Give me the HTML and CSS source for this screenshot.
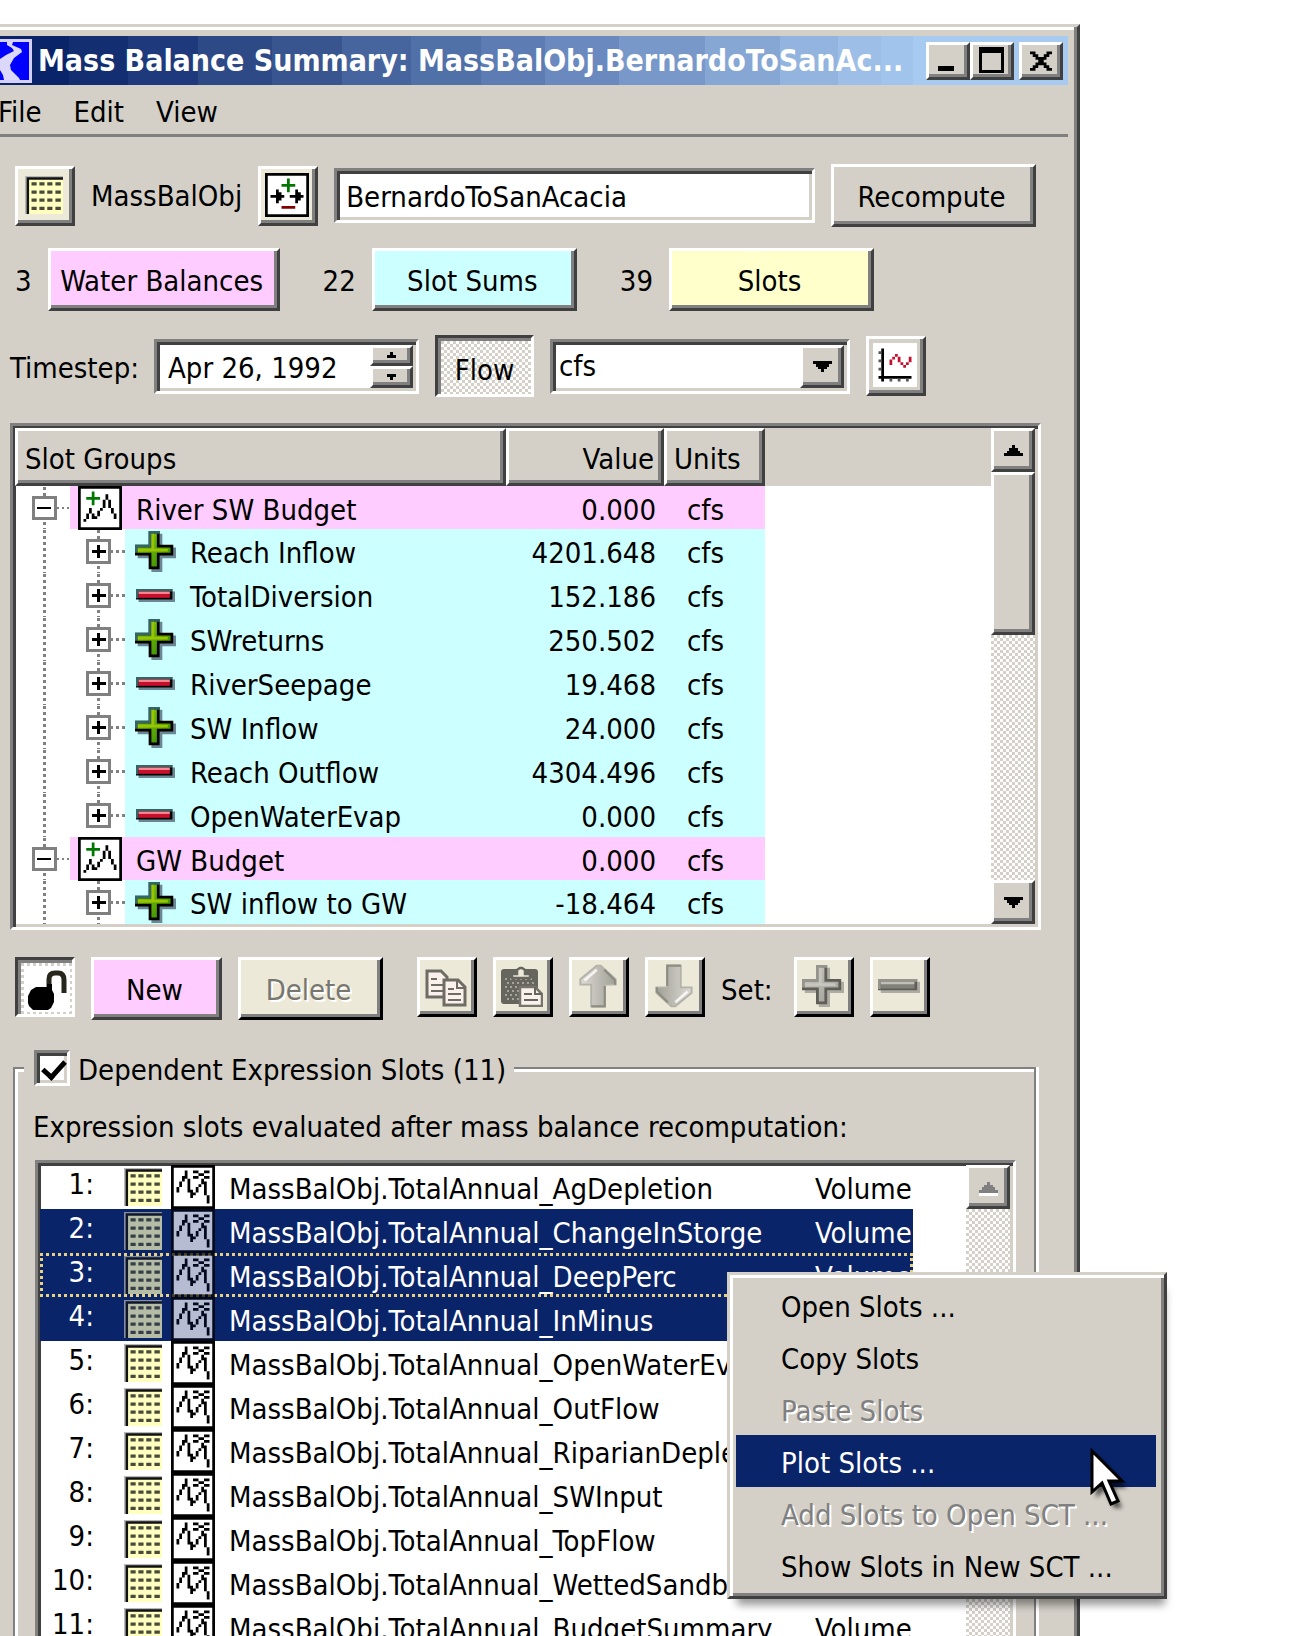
FILE: index.html
```html
<!DOCTYPE html>
<html lang="en">
<head>
<meta charset="utf-8">
<title>Mass Balance Summary</title>
<link rel="stylesheet" href="styles.css">
</head>
<body>
<svg class="defs" aria-hidden="true">
  <defs>
    <linearGradient id="g-green" x1="0" y1="0" x2="1" y2="1"><stop offset="0" stop-color="#8c1"/><stop offset="1" stop-color="#380"/></linearGradient>
    <linearGradient id="g-arrow" x1="0" y1="0" x2="1" y2="0"><stop offset="0" stop-color="#dddad4"/><stop offset="1" stop-color="#a0a096"/></linearGradient>
    <filter id="soft"><feGaussianBlur stdDeviation="2"/></filter>
  </defs>
  <symbol id="i-grid" viewBox="0 0 14 14">
    <path fill="#b8b8b8" d="M0 0h14v1H0zM0 0h1v14H0z"/>
    <path fill="#ffffc0" d="M1 1h13v13H1z"/>
    <path fill="#111" d="M.6 .5H14v.9H1.5V14H.6z"/>
    <path fill="#4a4a3c" d="M2.400 2.300h1.900v1.200H2.400zM5.300 2.300h1.900v1.200H5.300zM8.200 2.300h1.900v1.200H8.200zM11.200 2.300h2v1.200h-2zM2.400 5.300h1.900v1.200H2.400zM5.300 5.300h1.900v1.200H5.300zM8.200 5.300h1.900v1.200H8.200zM11.200 5.300h2v1.200h-2zM2.400 8.300h1.900v1.200H2.400zM5.300 8.300h1.900v1.200H5.300zM8.200 8.300h1.900v1.200H8.200zM11.200 8.300h2v1.200h-2zM2.400 11.300h1.900v1.200H2.400zM5.300 11.300h1.900v1.200H5.300zM8.200 11.300h1.900v1.200H8.200zM11.200 11.300h2v1.200h-2z"/>
  </symbol>
  <symbol id="i-balance" viewBox="0 0 16 16">
    <path d="M0 0h16v16H0z"/><path fill="#fff" d="M1 1h14v14H1z"/>
    <path fill="#070" d="M6 4h5v1H6zM8 2h1v5H8z"/>
    <path fill="#800000" d="M6 12h5v1H6z"/>
    <path d="M2 8h5v1H2zM4 6h1v5H4zM5 7h1v3H5zM9 8h5v1H9zM11 6h1v5h-1zM12 7h1v3h-1z"/>
  </symbol>
  <symbol id="i-plot" viewBox="0 0 16 16">
    <path fill="#fff" d="M0 0h16v16H0z"/>
    <path d="M3 2h1v12H3zM2 12h12v1H2z"/>
    <path fill="#555" d="M2 3h1v1H2zM2 6h1v1H2zM2 9h1v1H2zM6 13h1v1H6zM9 13h1v1H9zM12 13h1v1h-1z"/>
    <path fill="#c8102e" d="M6 6h1v2H6zM7 5h1v1H7zM8 4h1v1H8zM9 5h1v2H9zM10 7h1v1h-1zM11 8h1v1h-1zM12 7h1v1h-1zM13 5h1v2h-1z"/>
  </symbol>
  <symbol id="i-budget" viewBox="0 0 16 16">
    <path d="M0 0h16v16H0z"/><path fill="#fff" d="M1 1h14v14H1z"/>
    <path fill="#070" d="M3 4h5v1H3zM5 2h1v5H5z"/>
    <path d="M2 12h1v1H2zM3 10h1v2H3zM4 8h1v2H4zM5 10h1v2H5zM6 11h1v1H6zM7 9h1v2H7zM8 8h1v1H8zM9 5h1v3H9zM10 3h1v2h-1zM11 5h1v3h-1zM12 8h1v2h-1zM13 10h1v2h-1z"/>
  </symbol>
  <symbol id="i-expr" viewBox="0 0 16 16">
    <path class="edge" d="M0 0h16v16H0z"/><path class="face" d="M1 1h14v14H1z"/>
    <path class="edge" d="M2 8h1v2H2zM3 6h1v2H3zM4 4h1v2H4zM5 2h1v3H5zM6 5h1v5H6zM7 9h1v3H7zM8 10h1v1H8zM9 8h1v2H9zM10 7h1v1h-1zM11 5h1v2h-1zM12 6h1v5h-1zM13 11h1v3h-1zM8 2h2v1H8zM12 2h2v1h-2zM10 3h2v1h-2zM8 4h2v1H8zM12 4h2v1h-2z"/>
  </symbol>
  <symbol id="i-plus" viewBox="0 0 15 15">
    <path fill="#6b8796" d="M6 1h4v5h5v4h-5v5H6v-5H1V6h5z"/>
    <path d="M5 0h4v5h5v4H9v5H5V9H0V5h5z"/>
    <path fill="#366" d="M5 0h4v1H6v5H1v2H0V5h5z"/>
    <path fill="url(#g-green)" d="M6 1h2v5h5v2H8v5H6V8H1V6h5z"/>
    <path fill="#9bc400" d="M6 1h1v5.500h5v1H1v-1h5z"/>
  </symbol>
  <symbol id="i-minus" viewBox="0 0 15 5">
    <path fill="#6b8796" d="M1 1h14v4H1z"/><path d="M0 0h14v4H0z"/>
    <path fill="#366" d="M0 0h14v1H1v2.600H0z"/><path fill="#c8102e" d="M1 1h12v2.400H1z"/><path fill="#f58a92" d="M1 1h12v.9H1z"/>
  </symbol>
  <symbol id="t-group" viewBox="0 0 55 44" shape-rendering="crispEdges">
    <path class="dots" d="M29.500 1v43M41 22.500h14"/>
    <path class="box" d="M18.500 11.500h22v22h-22z"/><path d="M22 21h14v3H22z"/>
  </symbol>
  <symbol id="t-child" viewBox="0 0 110 44" shape-rendering="crispEdges">
    <path class="dots" d="M29.500 1v43M83.500 1v43M95 22.500h15"/>
    <path class="box" d="M72.500 11.500h22v22h-22z"/><path d="M77 21h14v3H77zM82 16h3v13h-3z"/>
  </symbol>
  <symbol id="t-last" viewBox="0 0 110 44" shape-rendering="crispEdges">
    <path class="dots" d="M29.500 1v43M83.500 1v12M95 22.500h15"/>
    <path class="box" d="M72.500 11.500h22v22h-22z"/><path d="M77 21h14v3H77zM82 16h3v13h-3z"/>
  </symbol>
  <symbol id="i-up" viewBox="0 0 7 4" shape-rendering="crispEdges"><path d="M3 0h1v1h1v1h1v1h1v1H0V3h1V2h1V1h1z"/></symbol>
  <symbol id="i-down" viewBox="0 0 7 4" shape-rendering="crispEdges"><path d="M0 0h7v1H6v1H5v1H4v1H3V3H2V2H1V1H0z"/></symbol>
  <symbol id="i-uparrow" viewBox="0 0 14 16">
    <path fill="url(#g-arrow)" stroke="#b4b3aa" stroke-width=".7" d="M6.500 .5h1.500l5.500 5v2H9.500v8h-5v-8H.5v-2z"/>
    <path fill="none" stroke="#8c8c82" stroke-width=".8" d="M9.500 8v7.500h-5M13.300 7.500V6l-4-4"/>
    <path fill="none" stroke="#fff" stroke-width="1" opacity=".8" d="M2 6l4.500-4"/>
  </symbol>
</svg>

<main class="window">
  <header class="titlebar">
    <svg class="app-icon" viewBox="0 0 32 44" aria-hidden="true"><path fill="#d4d0f8" d="M0 0h32v44H0z"/><path fill="#00f" d="M0 3h29v38H0z"/><path fill="#dcd8fc" d="M7 3h6l-1 3 9 4 1 3-8 6-4 7 1 5 8 8 1 2H4l-1-5-3-5V20l6-4 8-4-2-3-5-3z"/></svg>
    <h1>Mass Balance Summary: MassBalObj.BernardoToSanAc...</h1>
    <div class="caption">
      <button class="raised cap" aria-label="Minimize"><svg viewBox="0 0 28 28"><path d="M5 19h16v5H5z"/></svg></button>
      <button class="raised cap" aria-label="Maximize"><svg viewBox="0 0 28 28" shape-rendering="crispEdges"><path fill-rule="evenodd" d="M2 0h25v26H2zM5 6v17h19V6z"/></svg></button>
      <button class="raised cap close" aria-label="Close"><svg class="cross" viewBox="0 0 8 7"><path d="M0 0h2v1h1v1h2V1h1V0h2v1H7v1H6v1H5v1h1v1h1v1h1v1H6V6H5V5H3v1H2v1H0V6h1V5h1V4h1V3H2V2H1V1H0z"/></svg></button>
    </div>
  </header>
  <nav class="menubar"><a href="#file">File</a><a href="#edit">Edit</a><a href="#view">View</a></nav>

  <div class="content">
    <div class="row object-row">
      <button class="raised tool cream" aria-label="Open object"><svg class="grid-icon"><use href="#i-grid"/></svg></button>
      <label for="slot-name">MassBalObj</label>
      <button class="raised tool cream" aria-label="Mass balance slot"><svg class="px16"><use href="#i-balance"/></svg></button>
      <input class="sunken name-input" id="slot-name" type="text" value="BernardoToSanAcacia">
      <button class="raised push">Recompute</button>
    </div>

    <div class="row count-row">
      <div class="count"><span>3</span><button class="raised push pink wide">Water Balances</button></div>
      <div class="count"><span>22</span><button class="raised push cyan">Slot Sums</button></div>
      <div class="count"><span>39</span><button class="raised push yellow">Slots</button></div>
    </div>

    <div class="row time-row">
      <label class="time-label" for="timestep">Timestep:</label>
      <div class="sunken field spin">
        <input id="timestep" type="text" value="Apr 26, 1992">
        <div class="spinner">
          <button class="raised" aria-label="Next timestep"><svg viewBox="0 0 3 2" shape-rendering="crispEdges"><path d="M1 0h1v1h1v1H0V1h1z"/></svg></button>
          <button class="raised" aria-label="Previous timestep"><svg viewBox="0 0 3 2" shape-rendering="crispEdges"><path d="M0 0h3v1H2v1H1V1H0z"/></svg></button>
        </div>
      </div>
      <button class="pressed flow" aria-pressed="true">Flow</button>
      <div class="sunken field combo">
        <select aria-label="Units"><option>cfs</option></select>
        <span class="raised drop"><svg class="tri"><use href="#i-down"/></svg></span>
      </div>
      <button class="raised tool" aria-label="Plot"><svg class="px16"><use href="#i-plot"/></svg></button>
    </div>

    <section class="sunken groups">
      <table class="tree">
        <colgroup><col class="c-name"><col class="c-value"><col class="c-units"><col></colgroup>
        <thead><tr><th class="raised">Slot Groups</th><th class="raised num">Value</th><th class="raised">Units</th><td></td></tr></thead>
        <tbody>
          <tr class="group"><td><div class="node"><svg class="g1"><use href="#t-group"/></svg><span><svg class="px16"><use href="#i-budget"/></svg><b>River SW Budget</b></span></div></td><td>0.000</td><td>cfs</td><td></td></tr>
          <tr class="child"><td><div class="node"><svg class="g2"><use href="#t-child"/></svg><span><svg class="sign"><use href="#i-plus"/></svg><b>Reach Inflow</b></span></div></td><td>4201.648</td><td>cfs</td><td></td></tr>
          <tr class="child"><td><div class="node"><svg class="g2"><use href="#t-child"/></svg><span><svg class="sign minus"><use href="#i-minus"/></svg><b>TotalDiversion</b></span></div></td><td>152.186</td><td>cfs</td><td></td></tr>
          <tr class="child"><td><div class="node"><svg class="g2"><use href="#t-child"/></svg><span><svg class="sign"><use href="#i-plus"/></svg><b>SWreturns</b></span></div></td><td>250.502</td><td>cfs</td><td></td></tr>
          <tr class="child"><td><div class="node"><svg class="g2"><use href="#t-child"/></svg><span><svg class="sign minus"><use href="#i-minus"/></svg><b>RiverSeepage</b></span></div></td><td>19.468</td><td>cfs</td><td></td></tr>
          <tr class="child"><td><div class="node"><svg class="g2"><use href="#t-child"/></svg><span><svg class="sign"><use href="#i-plus"/></svg><b>SW Inflow</b></span></div></td><td>24.000</td><td>cfs</td><td></td></tr>
          <tr class="child"><td><div class="node"><svg class="g2"><use href="#t-child"/></svg><span><svg class="sign minus"><use href="#i-minus"/></svg><b>Reach Outflow</b></span></div></td><td>4304.496</td><td>cfs</td><td></td></tr>
          <tr class="child"><td><div class="node"><svg class="g2"><use href="#t-last"/></svg><span><svg class="sign minus"><use href="#i-minus"/></svg><b>OpenWaterEvap</b></span></div></td><td>0.000</td><td>cfs</td><td></td></tr>
          <tr class="group"><td><div class="node"><svg class="g1"><use href="#t-group"/></svg><span><svg class="px16"><use href="#i-budget"/></svg><b>GW Budget</b></span></div></td><td>0.000</td><td>cfs</td><td></td></tr>
          <tr class="child"><td><div class="node"><svg class="g2"><use href="#t-child"/></svg><span><svg class="sign"><use href="#i-plus"/></svg><b>SW inflow to GW</b></span></div></td><td>-18.464</td><td>cfs</td><td></td></tr>
        </tbody>
      </table>
      <div class="scroll">
        <button class="raised arrow" aria-label="Scroll up"><svg class="tri"><use href="#i-up"/></svg></button>
        <div class="raised thumb"></div>
        <div class="track"></div>
        <button class="raised arrow" aria-label="Scroll down"><svg class="tri"><use href="#i-down"/></svg></button>
      </div>
    </section>

    <div class="row tools-row">
      <button class="pressed tool lock" aria-label="Unlocked"><svg viewBox="0 0 46 46"><path fill="#fff" d="M0 0h46v46H0z"/><path fill="none" stroke="#26261c" stroke-width="5" d="M25 24V13q0-6 6-6h3q6 0 6 7v13"/><path d="M12 21h11v-3h5v6l2 4v8l-3 6-3 2H9l-4-4-1-3v-7l3-6z"/></svg></button>
      <button class="raised push pink new">New</button>
      <button class="raised push delete off" disabled>Delete</button>
      <button class="raised tool off copy" aria-label="Copy" disabled><svg viewBox="0 0 42 42"><path fill="#fbf1ec" stroke="#6e6c64" stroke-width="3" d="M2 6h14l6 6v20H2z"/><path stroke="#6e6c64" stroke-width="2" d="M6 14h6M6 20h12M6 26h12"/><path fill="#fbf1ec" stroke="#6e6c64" stroke-width="3" d="M19 15h14l7 7v18H19z"/><path fill="none" stroke="#6e6c64" stroke-width="2" d="M32 15v8h8M23 24h6M23 29h13M23 35h13"/></svg></button>
      <button class="raised tool off" aria-label="Paste" disabled><svg viewBox="0 0 42 42"><rect x="0" y="4" width="37" height="35" rx="3" fill="#66665e"/><path stroke="#a4a497" stroke-width="2" stroke-dasharray="2 3" d="M4 14h29M6 18h27M4 22h16M6 26h14M4 30h14M6 34h12"/><path fill="#ece9d8" stroke="#66665e" stroke-width="2.500" d="M11 13V9h5V5l3-2h2l3 2v4h5v4z"/><path fill="#fbf1ec" stroke="#76746c" stroke-width="2.500" d="M19 22h15l7 7v12H19z"/><path fill="none" stroke="#66665e" stroke-width="2" d="M23 29h8M23 35h14M34 22v7h7"/></svg></button>
      <button class="raised tool off" aria-label="Move up" disabled><svg class="mover"><use href="#i-uparrow"/></svg></button>
      <button class="raised tool off" aria-label="Move down" disabled><svg class="mover flip"><use href="#i-uparrow"/></svg></button>
      <span class="set">Set:</span>
      <button class="raised tool off" aria-label="Set plus" disabled><svg class="sign gray"><use href="#i-plus"/></svg></button>
      <button class="raised tool off" aria-label="Set minus" disabled><svg class="sign minus gray"><use href="#i-minus"/></svg></button>
    </div>

    <fieldset class="slots">
      <legend><input class="sunken check" type="checkbox" id="dep" checked><label for="dep">Dependent Expression Slots (11)</label></legend>
      <p>Expression slots evaluated after mass balance recomputation:</p>
      <div class="list">
        <div class="list-body">
        <table class="exprs">
          <colgroup><col class="e-num"><col class="e-grid"><col class="e-icon"><col class="e-name"><col class="e-type"></colgroup>
          <tbody>
          <tr><td>1:</td><td><svg class="grid-icon"><use href="#i-grid"/></svg></td><td><svg class="px16"><use href="#i-expr"/></svg></td><td>MassBalObj.TotalAnnual_AgDepletion</td><td>Volume</td></tr>
          <tr class="sel"><td>2:</td><td><svg class="grid-icon"><use href="#i-grid"/></svg></td><td><svg class="px16"><use href="#i-expr"/></svg></td><td>MassBalObj.TotalAnnual_ChangeInStorge</td><td>Volume</td></tr>
          <tr class="sel focus"><td>3:</td><td><svg class="grid-icon"><use href="#i-grid"/></svg></td><td><svg class="px16"><use href="#i-expr"/></svg></td><td>MassBalObj.TotalAnnual_DeepPerc</td><td>Volume</td></tr>
          <tr class="sel"><td>4:</td><td><svg class="grid-icon"><use href="#i-grid"/></svg></td><td><svg class="px16"><use href="#i-expr"/></svg></td><td>MassBalObj.TotalAnnual_InMinus</td><td>Volume</td></tr>
          <tr><td>5:</td><td><svg class="grid-icon"><use href="#i-grid"/></svg></td><td><svg class="px16"><use href="#i-expr"/></svg></td><td>MassBalObj.TotalAnnual_OpenWaterEvap</td><td>Volume</td></tr>
          <tr><td>6:</td><td><svg class="grid-icon"><use href="#i-grid"/></svg></td><td><svg class="px16"><use href="#i-expr"/></svg></td><td>MassBalObj.TotalAnnual_OutFlow</td><td>Volume</td></tr>
          <tr><td>7:</td><td><svg class="grid-icon"><use href="#i-grid"/></svg></td><td><svg class="px16"><use href="#i-expr"/></svg></td><td>MassBalObj.TotalAnnual_RiparianDepletion</td><td>Volume</td></tr>
          <tr><td>8:</td><td><svg class="grid-icon"><use href="#i-grid"/></svg></td><td><svg class="px16"><use href="#i-expr"/></svg></td><td>MassBalObj.TotalAnnual_SWInput</td><td>Volume</td></tr>
          <tr><td>9:</td><td><svg class="grid-icon"><use href="#i-grid"/></svg></td><td><svg class="px16"><use href="#i-expr"/></svg></td><td>MassBalObj.TotalAnnual_TopFlow</td><td>Volume</td></tr>
          <tr><td>10:</td><td><svg class="grid-icon"><use href="#i-grid"/></svg></td><td><svg class="px16"><use href="#i-expr"/></svg></td><td>MassBalObj.TotalAnnual_WettedSandbar</td><td>Volume</td></tr>
          <tr><td>11:</td><td><svg class="grid-icon"><use href="#i-grid"/></svg></td><td><svg class="px16"><use href="#i-expr"/></svg></td><td>MassBalObj.TotalAnnual_BudgetSummary</td><td>Volume</td></tr>
          </tbody>
        </table>
        </div>
        <div class="scroll">
          <button class="raised arrow" aria-label="Scroll up" disabled><svg class="tri"><use href="#i-up"/></svg></button>
          <div class="track"></div>
        </div>
      </div>
    </fieldset>
  </div>
</main>

<div class="context" role="menu">
  <button role="menuitem">Open Slots ...</button>
  <button role="menuitem">Copy Slots</button>
  <button role="menuitem" disabled>Paste Slots</button>
  <button role="menuitem" class="hot">Plot Slots ...</button>
  <button role="menuitem" disabled>Add Slots to Open SCT ...</button>
  <button role="menuitem">Show Slots in New SCT ...</button>
  <svg class="cursor" viewBox="0 0 44 70" aria-hidden="true"><path filter="url(#soft)" fill="#000" opacity=".6" d="M6 6v44l9-8 9 18h8l-8-20h13z"/><path fill="#fff" stroke="#000" stroke-width="3" d="M2 3v41l10-9 9 21 7-3-9-20h13z"/></svg>
</div>
</body>
</html>
```
FILE: styles.css
```css
:root {
  --face: #d4d0c8;
  --shade: #808080;
  --dark: #404040;
  --navy: #0a246a;
  --pink: #ffccff;
  --cyan: #ccffff;
  --checks: repeating-conic-gradient(#fff 0 25%, #d4d0c8 0 50%) 0 0 / 6px 6px;
}

* { box-sizing: border-box; }

body {
  margin: 0;
  position: relative;
  height: 100vh;
  min-width: 1180px;
  overflow: hidden;
  background: #fff;
  color: #000;
  font: 29px/34px "DejaVu Sans Condensed", "DejaVu Sans", "Noto Sans", sans-serif;
  display: flex;
  flex-direction: column;
}

button, input, select { font: inherit; color: inherit; margin: 0; padding: 0; border-radius: 0; }
svg { display: block; }
.defs { position: absolute; width: 0; height: 0; }

/* Classic bevels */
.raised {
  background: var(--face);
  border: 3px solid;
  border-color: #fff var(--dark) var(--dark) #fff;
  box-shadow: inset -3px -3px 0 var(--shade);
}
.sunken {
  background: #fff;
  border: 3px solid;
  border-color: var(--shade) #fff #fff var(--shade);
  box-shadow: inset 3px 3px 0 var(--dark), inset -3px -3px 0 var(--face);
}
.pressed {
  background: var(--checks);
  border: 3px solid;
  border-color: var(--dark) #fff #fff var(--dark);
  box-shadow: inset 3px 3px 0 var(--shade);
}

/* Window frame */
.window {
  flex: 1;
  min-height: 0;
  display: flex;
  flex-direction: column;
  margin: 24px 231px 0 0;
  padding: 9px 9px 0 0;
  background: var(--face);
  border-top: 3px solid var(--face);
  border-right: 3px solid var(--dark);
  box-shadow: inset -3px 0 0 var(--shade), inset 0 3px 0 #fff;
}
.titlebar {
  flex: none;
  height: 49px;
  display: flex;
  align-items: center;
  padding-right: 5px;
  background: linear-gradient(90deg,
    #0a246a 6.5%, #132e71 0 12%, #1e3a7c 0 18.5%, #2d4a87 0 25.5%, #38558f 0 32%,
    #46659e 0 38.5%, #5070a8 0 45%, #5c7cb3 0 51%, #6a8abf 0 58%, #7898c9 0 66%,
    #86a6d4 0 73%, #92b4de 0 78.5%, #9cbee7 0 82.5%, #a1c4ec 0 85.5%, #a6caf0 0);
}
.app-icon { flex: none; width: 32px; height: 44px; }
.titlebar h1 {
  flex: 1;
  min-width: 0;
  margin: 0;
  padding-left: 6px;
  font-size: 30px;
  line-height: 34px;
  color: #fff;
  white-space: nowrap;
}
.caption { display: flex; }
.cap { width: 44px; height: 38px; padding: 2px 4px; }
.cap svg { width: 28px; height: 28px; }
.cap .cross { width: 22px; height: 20px; margin: 1px 0 0 4px; }
.close { margin-left: 5px; }

.menubar {
  flex: none;
  display: flex;
  gap: 32px;
  height: 52px;
  margin-left: -2px;
  padding-top: 10px;
  border-bottom: 3px solid var(--shade);
}
.menubar a { color: inherit; text-decoration: none; }

.content {
  flex: 1;
  min-height: 0;
  display: flex;
  flex-direction: column;
  padding: 27px 27px 0 10px;
}
.row { flex: none; display: flex; align-items: center; gap: 16px; padding: 0 5px; }

.tool {
  flex: none;
  width: 60px;
  height: 60px;
  display: flex;
  align-items: center;
  justify-content: center;
  padding: 0 2px 2px 0;
}
.cream { background: #ece9d8; }
.px16 { width: 44px; height: 44px; }
.grid-icon { width: 38px; height: 38px; }
.push { width: 205px; height: 63px; padding: 2px 4px 0 0; }
.pink { background: var(--pink); }
.cyan { background: var(--cyan); }
.yellow { background: #ffffcc; }
.wide { width: 232px; }

.name-input { flex: 1; min-width: 0; height: 55px; padding: 2px 9px 0; }

.count-row { gap: 43px; margin-top: 21px; }
.count { display: flex; align-items: center; gap: 16px; }
.count span { padding-top: 2px; }

.time-row { margin-top: 24px; padding-left: 0; }
.time-label { width: 128px; padding-top: 4px; }
.field { display: flex; height: 55px; padding: 3px; }
.field input, .field select {
  flex: 1;
  min-width: 0;
  appearance: none;
  border: 0;
  outline: 0;
  background: none;
}
.spin { width: 265px; }
.spin input { padding: 4px 0 0 8px; }
.spinner { width: 43px; display: flex; flex-direction: column; }
.spinner button { flex: 1; display: flex; align-items: center; justify-content: center; }
.spinner svg { width: 9px; height: 6px; }
.flow { width: 99px; height: 62px; padding-top: 8px; }
.combo { width: 300px; }
.combo select { padding-left: 3px; }
.drop { width: 44px; display: flex; align-items: center; justify-content: center; }
.tri { width: 19px; height: 11px; }

/* Slot group tree */
.groups { flex: none; display: flex; margin-top: 26px; padding: 2px 3px 3px 2px; }
.tree { flex: 1; min-width: 0; border-collapse: separate; border-spacing: 0; table-layout: fixed; }
.c-name { width: 491px; }
.c-value { width: 158px; }
.c-units { width: 101px; }
.tree th { height: 58px; padding: 4px 7px 0; font-weight: normal; text-align: left; }
.tree th.num { text-align: right; }
.tree thead td { background: var(--face); }
.tree tbody td { padding: 0; height: 44px; }
.tree tbody .group td { height: 43px; }
.tree tbody td:nth-child(2) { padding: 4px 8px 0 0; text-align: right; }
.tree tbody td:nth-child(3) { padding: 4px 0 0 23px; }
.group td:nth-child(2), .group td:nth-child(3), .group span { background: var(--pink); }
.child td:nth-child(2), .child td:nth-child(3), .child span { background: var(--cyan); }
.node { display: flex; height: 44px; }
.group .node { height: 43px; }
.node span { flex: 1; display: flex; align-items: center; padding-left: 10px; }
.group .node span { padding-left: 8px; }
.node b { font-weight: normal; padding-top: 4px; margin-left: 14px; white-space: nowrap; }
.g1 { flex: none; width: 55px; height: 43px; }
.g2 { flex: none; width: 110px; height: 44px; }
.dots { fill: none; stroke: var(--shade); stroke-width: 3; stroke-dasharray: 3 3; }
.box { fill: #fff; stroke: var(--shade); stroke-width: 3; }
.sign { width: 41px; height: 41px; }
.minus { height: 13px; }

.scroll { flex: none; width: 44px; display: flex; flex-direction: column; }
.arrow { flex: none; height: 44px; display: flex; align-items: center; justify-content: center; }
.arrow:disabled svg { fill: var(--shade); filter: drop-shadow(0 3px 0 #fff); }
.thumb { height: 163px; }
.track { flex: 1; background: var(--checks); }

/* Toolbar below the tree */
.tools-row { margin-top: 27px; align-items: flex-start; }
.lock svg { width: 46px; height: 46px; margin: 6px 0 0 6px; }
.new { width: 131px; }
.delete { width: 145px; }
.off { background: #ece9d8; border-color: #fff #000 #000 #fff; }
.off svg { width: 42px; height: 42px; }
.delete:disabled { color: #77776f; text-shadow: 2px 2px 0 #fff; }
.copy { margin-left: 18px; }
.off .mover { width: 38px; height: 44px; }
.flip { transform: rotate(180deg); }
.off .minus { height: 14px; }
.gray { filter: grayscale(1) opacity(.6); }
.set { width: 57px; padding-top: 16px; }

/* Dependent expression slots */
.slots {
  flex: 1;
  min-width: 0;
  min-height: 0;
  display: flex;
  flex-direction: column;
  margin: 30px 5px 0 3px;
  padding: 0 18px 0 20px;
  border: 2px solid var(--shade);
  border-bottom: 0;
  box-shadow: inset 3px 3px 0 #fff, 3px 0 0 #fff;
}
.slots legend {
  display: flex;
  align-items: center;
  height: 36px;
  margin-left: -11px;
  padding: 0 8px 0 10px;
  background: var(--face);
}
.slots legend label { padding-top: 4px; }
.check { appearance: none; width: 36px; height: 36px; margin-right: 8px; position: relative; }
.check:checked::after {
  content: "";
  position: absolute;
  left: 10px;
  top: 3px;
  width: 9px;
  height: 18px;
  border: solid #000;
  border-width: 0 5px 5px 0;
  transform: rotate(42deg);
}
.slots p { flex: none; margin: 24px 0 16px -2px; white-space: nowrap; }
.list {
  flex: 1;
  min-height: 0;
  display: flex;
  padding: 2px 3px 0 2px;
  background: #fff;
  border: 3px solid;
  border-color: var(--shade) #fff #fff var(--shade);
  border-bottom: 0;
  box-shadow: inset 3px 3px 0 var(--dark), inset -3px 0 0 var(--face);
}
.list-body { flex: 1; min-width: 0; overflow: hidden; }
.exprs { width: 873px; border-collapse: separate; border-spacing: 0; table-layout: fixed; }
.e-num { width: 84px; }
.e-grid { width: 47px; }
.e-icon { width: 58px; }
.e-type { width: 98px; }
.exprs td { height: 44px; padding: 0; white-space: nowrap; }
.exprs td:nth-child(1) { padding: 0 30px 6px 0; text-align: right; }
.exprs td:nth-child(4), .exprs td:nth-child(5) { padding-top: 4px; }
.edge { fill: #000; }
.face { fill: #fff; }
.sel td { background: var(--navy); color: #fff; }
.sel svg { opacity: .7; }
.focus { outline: 3px dotted #e8d080; outline-offset: -3px; }

/* Popup menu */
.context {
  position: absolute;
  left: 727px;
  top: 1272px;
  width: 440px;
  padding: 4px 8px 5px 6px;
  background: var(--face);
  border: 3px solid;
  border-color: var(--face) var(--dark) var(--dark) var(--face);
  box-shadow: inset 3px 3px 0 #fff, inset -3px -3px 0 var(--shade), 4px 12px 8px -6px rgba(0, 0, 0, .4);
}
.context button {
  display: block;
  width: 100%;
  height: 52px;
  padding: 4px 0 0 45px;
  border: 0;
  background: none;
  text-align: left;
  white-space: nowrap;
}
.context button:disabled { color: var(--shade); text-shadow: 2px 2px 0 #fff; }
.context .hot { background: var(--navy); color: #fff; }
.cursor { position: absolute; left: 360px; top: 173px; width: 44px; height: 70px; }
```
